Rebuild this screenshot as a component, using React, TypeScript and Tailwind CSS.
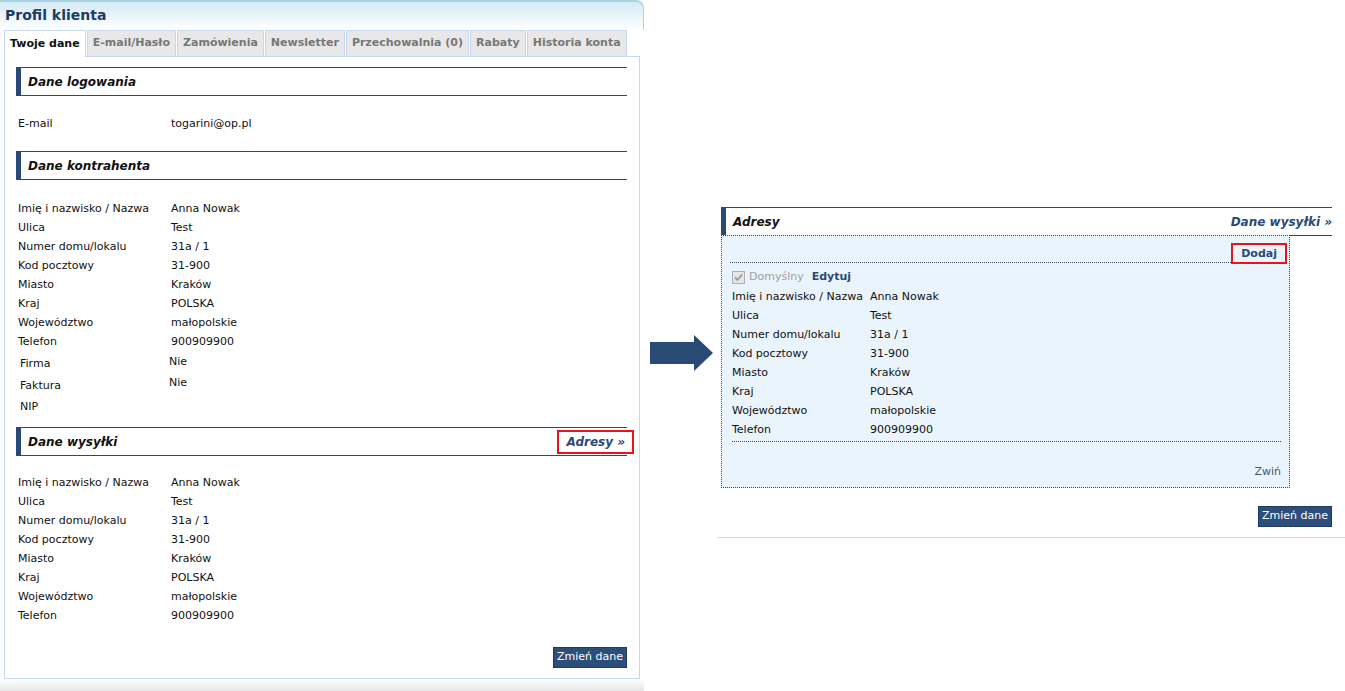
import React from "react";

type Row = [string, string];

const address: Row[] = [
  ["Imię i nazwisko / Nazwa", "Anna Nowak"],
  ["Ulica", "Test"],
  ["Numer domu/lokalu", "31a / 1"],
  ["Kod pocztowy", "31-900"],
  ["Miasto", "Kraków"],
  ["Kraj", "POLSKA"],
  ["Województwo", "małopolskie"],
  ["Telefon", "900909900"],
];

const tabs = [
  "Twoje dane",
  "E-mail/Hasło",
  "Zamówienia",
  "Newsletter",
  "Przechowalnia (0)",
  "Rabaty",
  "Historia konta",
];

function SectionHeader({
  title,
  link,
  boxed,
  className = "",
}: {
  title: string;
  link?: string;
  boxed?: boolean;
  className?: string;
}) {
  return (
    <div
      className={`flex h-[29px] items-center justify-between border-y border-l-[5px] border-[#2a4a76] pl-[7px] ${className}`}
    >
      <span className="text-[12px] font-bold italic text-[#111]">{title}</span>
      {link && (
        <span
          className={`text-[12px] font-bold italic text-[#2a4a76] ${
            boxed ? "-mr-[7px] border-2 border-[#e8141b] px-[7px] py-[1px]" : ""
          }`}
        >
          {link}
        </span>
      )}
    </div>
  );
}

function DataRows({ rows, labelW }: { rows: Row[]; labelW: string }) {
  return (
    <div className="flex flex-col">
      {rows.map(([label, value]) => (
        <div key={label} className="flex h-[19px] items-center text-[11px] text-[#111]">
          <span className={labelW}>{label}</span>
          <span>{value}</span>
        </div>
      ))}
    </div>
  );
}

function Button() {
  return (
    <button className="h-[21px] w-[74px] border border-[#1e3a60] bg-[#2d4e7b] text-[11px] text-white">
      Zmień dane
    </button>
  );
}

function Checkbox() {
  return (
    <svg width="13" height="13" viewBox="0 0 13 13">
      <rect x="0.5" y="0.5" width="12" height="12" fill="#e6e6e6" stroke="#b0b0b0" />
      <path d="M3 6.5 L5.5 9 L10 3.5" fill="none" stroke="#9a9a9a" strokeWidth="1.8" />
    </svg>
  );
}

function LeftPanel() {
  return (
    <div className="flex h-[691px] w-[644px] shrink-0 flex-col">
      <div className="h-[30px] rounded-tr-[8px] border-t-2 border-r border-[#a8d3e6] bg-gradient-to-b from-[#d4eaf5] to-white pl-[5px] pt-[3px] text-[14px] font-bold text-[#1c3d63]">
        Profil klienta
      </div>
      <div className="flex h-[26px] pl-[4px]">
        {tabs.map((t, i) => (
          <div
            key={t}
            className={`flex items-center border border-b-0 border-[#c6d7ef] px-[5px] text-[11px] font-bold ${
              i === 0
                ? "relative z-10 -mb-px bg-white text-[#111]"
                : "ml-px bg-[#e8e8e8] text-[#777]"
            }`}
          >
            {t}
          </div>
        ))}
      </div>
      <div className="ml-[4px] flex w-[636px] flex-1 flex-col border border-[#c6d7ef] bg-white pt-[10px] pl-[11px] pr-[12px]">
        <SectionHeader title="Dane logowania" />
        <div className="mt-[19px] flex h-[19px] items-center pl-[2px] text-[11px] text-[#111]">
          <span className="w-[153px]">E-mail</span>
          <span>togarini@op.pl</span>
        </div>
        <SectionHeader title="Dane kontrahenta" className="mt-[17px]" />
        <div className="mt-[20px] pl-[2px]">
          <DataRows rows={address} labelW="w-[153px]" />
          <div className="flex h-[21px] items-start pt-[2px] text-[11px] text-[#111]">
            <span className="w-[151px] pl-[2px] pt-[2px]">Firma</span>
            <span>Nie</span>
          </div>
          <div className="flex h-[21px] items-start pt-[2px] text-[11px] text-[#111]">
            <span className="w-[151px] pl-[2px] pt-[3px]">Faktura</span>
            <span>Nie</span>
          </div>
          <div className="flex h-[21px] items-center pt-[5px] text-[11px] text-[#111]">
            <span className="pl-[2px]">NIP</span>
          </div>
        </div>
        <SectionHeader title="Dane wysyłki" link="Adresy »" boxed className="mt-[12px]" />
        <div className="mt-[18px] pl-[2px]">
          <DataRows rows={address} labelW="w-[153px]" />
        </div>
        <div className="mt-[21px] flex justify-end">
          <Button />
        </div>
      </div>
      <div className="h-[12px] bg-gradient-to-b from-white to-[#e6e6e6]" />
    </div>
  );
}

function Arrow() {
  return (
    <div className="w-[74px] shrink-0 pl-[6px] pt-[335px]">
      <svg width="64" height="36" viewBox="0 0 64 36">
        <path d="M0 7 H44 V0 L63 18 L44 36 V29 H0 Z" fill="#2a4a76" />
      </svg>
    </div>
  );
}

function RightPanel() {
  return (
    <div className="flex w-[627px] flex-col pt-[207px]">
      <div className="pl-[3px] pr-[13px]">
        <SectionHeader title="Adresy" link="Dane wysyłki »" />
        <div className="-mt-px w-[569px] border border-dotted border-[#33466a] bg-[#eaf4fd] px-[8px] pb-[9px]">
          <div className="flex items-end">
            <div className="mb-[1px] flex-1 border-b border-dotted border-[#33466a]" />
            <span className="mt-[7px] mr-[-6px] border-2 border-[#e8141b] px-[8px] py-0 text-[11px] leading-[17px] font-bold text-[#2a4a76]">
              Dodaj
            </span>
          </div>
          <div className="ml-[2px] mt-[5px] flex h-[16px] items-center gap-[4px] text-[11px]">
            <Checkbox />
            <span className="text-[#a0a0a0]">Domyślny</span>
            <span className="ml-[4px] font-bold text-[#2a4a76]">Edytuj</span>
          </div>
          <div className="ml-[2px] mt-[3px] border-b border-dotted border-[#33466a] pb-[1px]">
            <DataRows rows={address} labelW="w-[138px]" />
          </div>
          <div className="mt-[23px] text-right text-[11px] leading-[13px] text-[#3d5677]">Zwiń</div>
        </div>
        <div className="mt-[18px] flex justify-end">
          <Button />
        </div>
      </div>
      <div className="mt-[10px] border-b border-[#c6d7ef]" />
    </div>
  );
}

export default function App() {
  return (
    <div className="flex h-[691px] w-[1345px] overflow-hidden bg-white font-['DejaVu_Sans',sans-serif]">
      <LeftPanel />
      <Arrow />
      <RightPanel />
    </div>
  );
}
